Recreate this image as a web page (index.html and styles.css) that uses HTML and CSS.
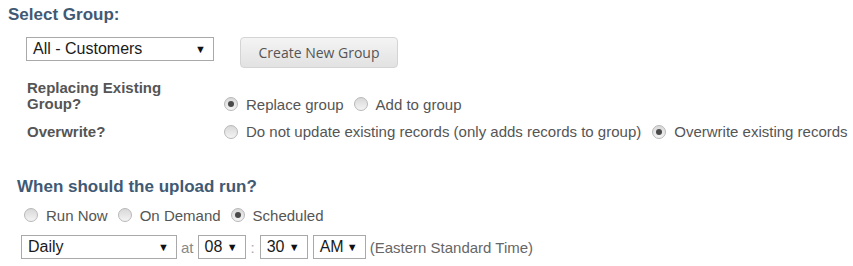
FILE: index.html
```html
<!DOCTYPE html>
<html>
<head>
<meta charset="utf-8">
<link rel="stylesheet" href="styles.css">
</head>
<body>
<div class="page">
  <h2 class="title">Select Group:</h2>
  <div class="group-row">
    <div class="select sel-group"><span class="val">All - Customers</span><span class="arrow">▼</span></div>
    <button class="btn">Create New Group</button>
  </div>
  <div class="opts">
    <div class="opt-row row-replace">
      <div class="lbl">Replacing Existing<br>Group?</div>
      <div class="choices">
        <label class="choice"><input type="radio" name="rep" checked><span>Replace group</span></label>
        <label class="choice"><input type="radio" name="rep"><span>Add to group</span></label>
      </div>
    </div>
    <div class="opt-row row-over">
      <div class="lbl">Overwrite?</div>
      <div class="choices">
        <label class="choice"><input type="radio" name="ow"><span class="long">Do not update existing records (only adds records to group)</span></label>
        <label class="choice"><input type="radio" name="ow" checked><span>Overwrite existing records</span></label>
      </div>
    </div>
  </div>
  <h2 class="title title-when">When should the upload run?</h2>
  <div class="choices run-row">
    <label class="choice"><input type="radio" name="run"><span>Run Now</span></label>
    <label class="choice"><input type="radio" name="run"><span>On Demand</span></label>
    <label class="choice"><input type="radio" name="run" checked><span>Scheduled</span></label>
  </div>
  <div class="sched-row">
    <div class="select sel-freq"><span class="val">Daily</span><span class="arrow">▼</span></div>
    <span class="sep">at</span>
    <div class="select sel-small"><span class="val">08</span><span class="arrow">▼</span></div>
    <span class="sep colon">:</span>
    <div class="select sel-small"><span class="val">30</span><span class="arrow">▼</span></div>
    <div class="select sel-ampm"><span class="val">AM</span><span class="arrow">▼</span></div>
    <span class="tz">(Eastern Standard Time)</span>
  </div>
</div>
</body>
</html>
```
FILE: styles.css
```css
* { box-sizing: border-box; }
body {
  margin: 0;
  font-family: "Liberation Sans", Arial, sans-serif;
  font-size: 15px;
  color: #555;
  background: #fff;
}
.page {
  padding: 5px 0 0 8px;
}
.title {
  margin: 0;
  font-size: 17px;
  line-height: 20px;
  font-weight: bold;
  color: #3f5a74;
}
.group-row {
  display: flex;
  align-items: flex-start;
  margin: 12px 0 0 18px;
}
.select {
  display: flex;
  align-items: center;
  height: 24px;
  border: 1px solid #a9a9a9;
  background: #fff;
  color: #1a1a1a;
  font-size: 16px;
  padding: 0 7px 0 6px;
}
.select .val { flex: 1; white-space: nowrap; }
.select .arrow { font-size: 11px; color: #111; }
.sel-group { width: 188px; }
.btn {
  margin-left: 26px;
  width: 158px;
  height: 31px;
  border: 1px solid #d4d4d4;
  border-radius: 4px;
  background: linear-gradient(#f4f4f4, #e2e2e2);
  font-family: "Open Sans", sans-serif;
  font-size: 14px;
  color: #555;
  padding: 0;
}
.opts {
  margin: 12px 0 0 19px;
}
.opt-row {
  display: flex;
}
.lbl {
  width: 197px;
  flex-shrink: 0;
  font-weight: bold;
  line-height: 16px;
}
.row-replace { align-items: flex-end; }
.row-replace .choices { height: 16px; }
.row-over { margin-top: 11px; align-items: center; }
.choices {
  display: flex;
  align-items: center;
  flex-shrink: 0;
}
.choice {
  display: flex;
  align-items: center;
  margin-right: 10px;
  white-space: nowrap;
}
.long { margin-right: 1px; }
.choice input {
  appearance: none;
  -webkit-appearance: none;
  flex-shrink: 0;
  margin: 0 8px 0 0;
  width: 14px;
  height: 14px;
  border-radius: 50%;
  border: 1px solid #b8b8b8;
  background: linear-gradient(#d8d8d8, #f4f4f4);
  position: relative;
}
.choice input:checked::after {
  content: "";
  position: absolute;
  left: 3px;
  top: 3px;
  width: 6px;
  height: 6px;
  border-radius: 50%;
  background: #4a4a4a;
}
.title-when {
  margin-top: 37px;
  margin-left: 9px;
}
.run-row {
  margin: 8px 0 0 16px;
  height: 20px;
}
.sched-row {
  display: flex;
  align-items: center;
  gap: 4px;
  margin: 10px 0 0 13px;
}
.sel-freq { width: 156px; }
.sel-small { width: 48px; }
.sel-ampm { width: 53px; margin-left: 1px; }
.sep { color: #888; }
.colon { color: #aaa; padding: 0 1px; }
.tz { color: #666; }
```
